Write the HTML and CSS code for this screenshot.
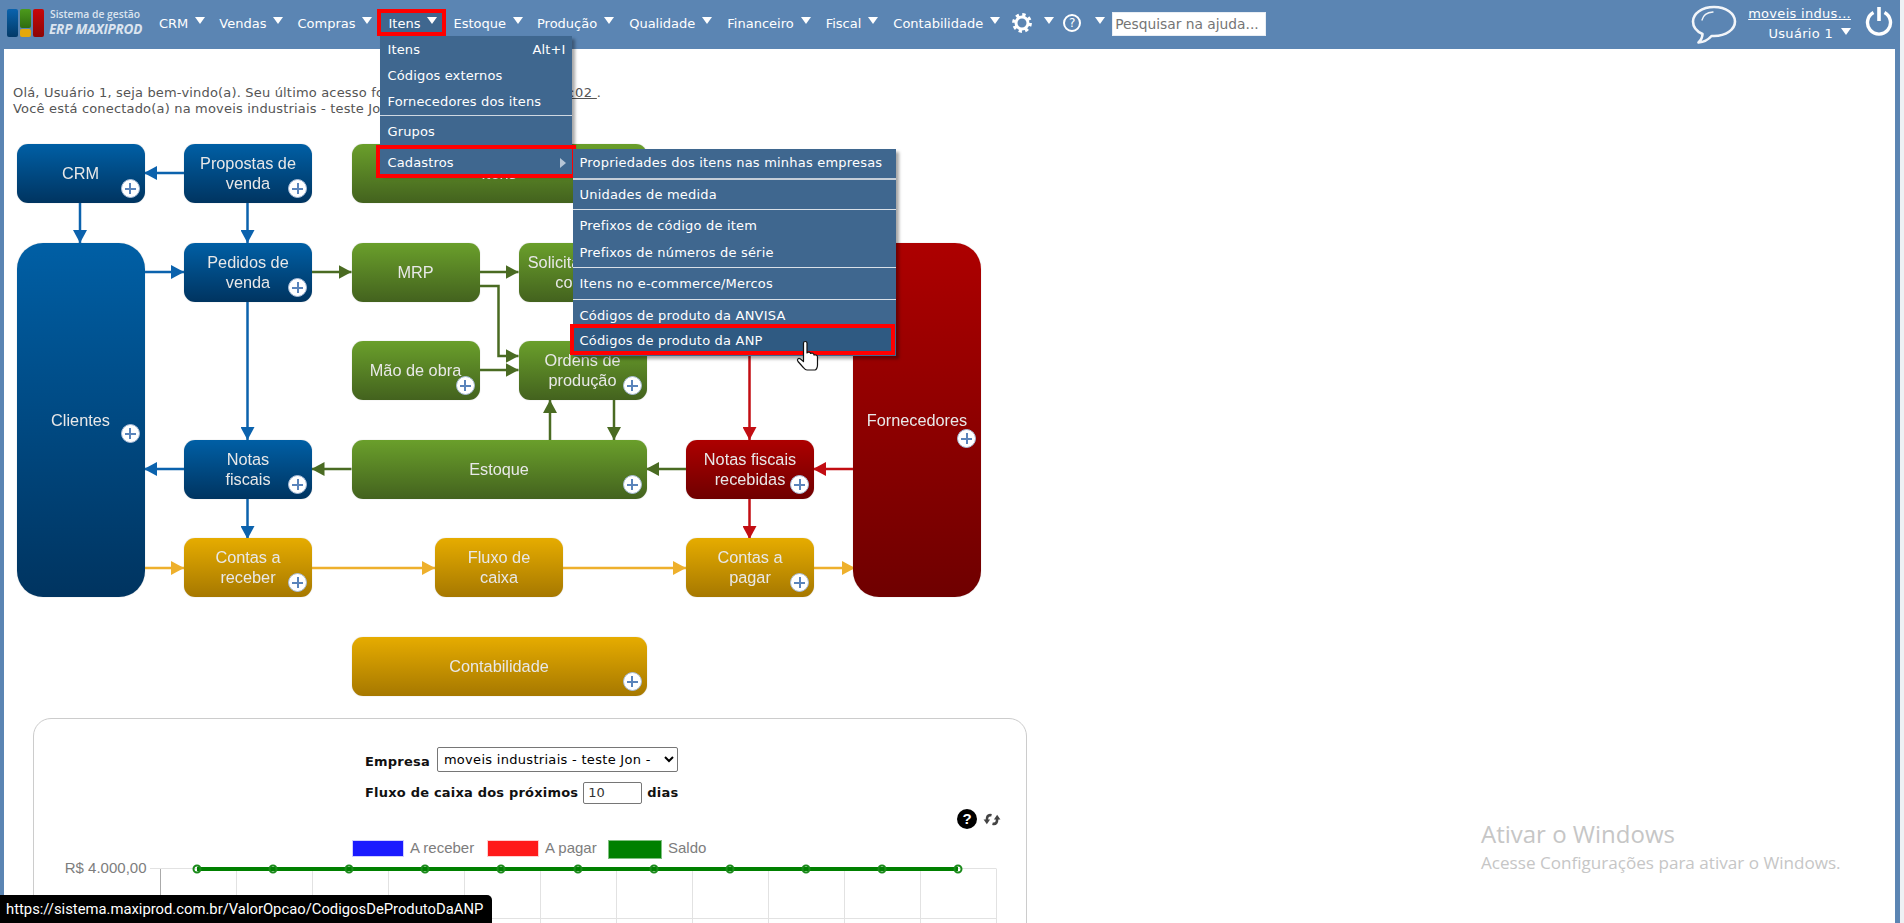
FILE: index.html
```html
<!DOCTYPE html>
<html lang="pt-BR">
<head>
<meta charset="utf-8">
<title>ERP MAXIPROD</title>
<link rel="stylesheet" href="styles.css">
</head>
<body>
<div class="page">
  <header class="topbar">
    <div class="logo">
      <svg class="logo-mark" width="37" height="28" viewBox="0 0 37 28">
        <defs>
          <linearGradient id="lb" x1="0" y1="0" x2="0" y2="1"><stop offset="0" stop-color="#0a63ad"/><stop offset="1" stop-color="#033a68"/></linearGradient>
          <linearGradient id="lg" x1="0" y1="0" x2="0" y2="1"><stop offset="0" stop-color="#4c9a1c"/><stop offset="1" stop-color="#2f6d10"/></linearGradient>
          <linearGradient id="lr" x1="0" y1="0" x2="0" y2="1"><stop offset="0" stop-color="#c80808"/><stop offset="1" stop-color="#8c0505"/></linearGradient>
        </defs>
        <rect x="0" y="0" width="11" height="28" rx="2" fill="url(#lb)"/>
        <rect x="13" y="0" width="11" height="19" rx="2" fill="url(#lg)"/>
        <rect x="13" y="20" width="11" height="8" rx="2" fill="#e4a80c"/>
        <rect x="26" y="0" width="11" height="28" rx="2" fill="url(#lr)"/>
      </svg>
      <div class="logo-text">
        <span class="logo-top">Sistema de gestão</span>
        <span class="logo-name">ERP MAXIPROD</span>
      </div>
    </div>
    <nav>
      <ul class="menu">
        <li class="menu-item"><a>CRM</a><span class="caret"></span></li>
        <li class="menu-item"><a>Vendas</a><span class="caret"></span></li>
        <li class="menu-item"><a>Compras</a><span class="caret"></span></li>
        <li class="menu-item is-open"><a>Itens</a><span class="caret"></span>
          <ul class="dropdown">
            <li class="drop-row"><span>Itens</span><span>Alt+I</span></li>
            <li class="drop-row">Códigos externos</li>
            <li class="drop-row">Fornecedores dos itens</li>
            <li class="drop-sep"></li>
            <li class="drop-row">Grupos</li>
            <li class="drop-sep"></li>
            <li class="drop-row is-active"><span>Cadastros</span><span class="sub-arrow"></span>
              <ul class="submenu">
                <li class="sub-row">Propriedades dos itens nas minhas empresas</li>
                <li class="sub-sep sub-sep-thick"></li>
                <li class="sub-row">Unidades de medida</li>
                <li class="sub-sep"></li>
                <li class="sub-row">Prefixos de código de item</li>
                <li class="sub-row">Prefixos de números de série</li>
                <li class="sub-sep"></li>
                <li class="sub-row">Itens no e-commerce/Mercos</li>
                <li class="sub-sep"></li>
                <li class="sub-row">Códigos de produto da ANVISA</li>
                <li class="sub-row is-hover">Códigos de produto da ANP</li>
              </ul>
            </li>
          </ul>
        </li>
        <li class="menu-item"><a>Estoque</a><span class="caret"></span></li>
        <li class="menu-item menu-loose"><a>Produção</a><span class="caret"></span></li>
        <li class="menu-item menu-loose"><a>Qualidade</a><span class="caret"></span></li>
        <li class="menu-item menu-loose"><a>Financeiro</a><span class="caret"></span></li>
        <li class="menu-item menu-loose"><a>Fiscal</a><span class="caret"></span></li>
        <li class="menu-item menu-loose"><a>Contabilidade</a><span class="caret"></span></li>
        <li class="menu-item menu-icon menu-gear">
          <svg width="20" height="20" viewBox="0 0 20 20"><circle cx="10" cy="10" r="8.3" fill="none" stroke="#fff" stroke-width="3.2" stroke-dasharray="3.26 3.26"/><circle cx="10" cy="10" r="6" fill="none" stroke="#fff" stroke-width="3"/></svg>
          <span class="caret"></span>
        </li>
        <li class="menu-item menu-icon menu-help">
          <span class="help-ring">?</span>
          <span class="caret"></span>
        </li>
      </ul>
    </nav>
    <input class="search" type="text" placeholder="Pesquisar na ajuda...">
    <div class="account">
      <svg class="chat" width="46" height="40" viewBox="0 0 46 40">
        <path d="M23 2C11 2 2 8.500 2 16.500C2 22 6 26.500 11.500 29C11.500 32 10 35 7.500 37.500C13 37 17.500 34.500 20.500 31C21.300 31 22.200 31 23 31C35 31 44 24.500 44 16.500C44 8.500 35 2 23 2Z" fill="none" stroke="#f2f5f9" stroke-width="2.600" stroke-linejoin="round"/>
        <path d="M11 15C12 10.500 16.500 7.500 22 7" fill="none" stroke="#f2f5f9" stroke-width="1.300" stroke-linecap="round"/>
      </svg>
      <div class="account-text">
        <a class="account-company">moveis indus...</a>
        <div class="account-user">Usuário 1<span class="caret"></span></div>
      </div>
      <svg class="power" width="28" height="30" viewBox="0 0 28 30">
        <path d="M8.500 6.500A11.500 11.500 0 1 0 19.500 6.500" fill="none" stroke="#fff" stroke-width="3.400"/>
        <path d="M14 1V15" fill="none" stroke="#fff" stroke-width="3.600"/>
      </svg>
    </div>
  </header>

  <main class="content">
    <p class="greeting">Olá, Usuário 1, seja bem-vindo(a). Seu último acesso foi em <u>09/05/2022 - às 10:15:02 </u>.<br>Você está conectado(a) na moveis industriais - teste Jon - 01.</p>

    <section class="diagram">
      <svg class="arrows" width="1000" height="566" viewBox="4 130 1000 566">
        <defs>
          <marker id="mb" markerUnits="userSpaceOnUse" markerWidth="13" markerHeight="14" refX="13" refY="7" orient="auto"><path d="M0 0L13 7L0 14Z" fill="#0b62ad"/></marker>
          <marker id="mg" markerUnits="userSpaceOnUse" markerWidth="13" markerHeight="14" refX="13" refY="7" orient="auto"><path d="M0 0L13 7L0 14Z" fill="#4a6b22"/></marker>
          <marker id="mr" markerUnits="userSpaceOnUse" markerWidth="13" markerHeight="14" refX="13" refY="7" orient="auto"><path d="M0 0L13 7L0 14Z" fill="#c20d12"/></marker>
          <marker id="my" markerUnits="userSpaceOnUse" markerWidth="13" markerHeight="14" refX="13" refY="7" orient="auto"><path d="M0 0L13 7L0 14Z" fill="#eeb02c"/></marker>
        </defs>
        <g class="a-blue">
          <path d="M184 173H144" marker-end="url(#mb)"/>
          <path d="M80 203V243" marker-end="url(#mb)"/>
          <path d="M247.500 203V243" marker-end="url(#mb)"/>
          <path d="M144 272H184" marker-end="url(#mb)"/>
          <path d="M247.500 301V440" marker-end="url(#mb)"/>
          <path d="M184 469H144" marker-end="url(#mb)"/>
          <path d="M247.500 499V539" marker-end="url(#mb)"/>
        </g>
        <g class="a-green">
          <path d="M311 272H351.500" marker-end="url(#mg)"/>
          <path d="M479 272H518.500" marker-end="url(#mg)"/>
          <path d="M479 286H498.500V356H518.500" marker-end="url(#mg)"/>
          <path d="M479 370H518.500" marker-end="url(#mg)"/>
          <path d="M614 400V440" marker-end="url(#mg)"/>
          <path d="M550 440V400" marker-end="url(#mg)"/>
          <path d="M351.500 469H311.500" marker-end="url(#mg)"/>
          <path d="M686 469H646" marker-end="url(#mg)"/>
        </g>
        <g class="a-red">
          <path d="M749.500 301V440" marker-end="url(#mr)"/>
          <path d="M853 469H813" marker-end="url(#mr)"/>
          <path d="M749.500 499V539" marker-end="url(#mr)"/>
        </g>
        <g class="a-gold">
          <path d="M144 568H184" marker-end="url(#my)"/>
          <path d="M311 568H435" marker-end="url(#my)"/>
          <path d="M562 568H686" marker-end="url(#my)"/>
          <path d="M813 568H855" marker-end="url(#my)"/>
        </g>
      </svg>
      <div class="node blue n-crm">CRM<i class="plus"></i></div>
      <div class="node blue n-prop">Propostas de<br>venda<i class="plus"></i></div>
      <div class="node green n-itens wide">Itens<i class="plus"></i></div>
      <div class="node blue tall n-cli">Clientes<i class="plus plus-cli"></i></div>
      <div class="node blue n-ped">Pedidos de<br>venda<i class="plus"></i></div>
      <div class="node green n-mrp">MRP</div>
      <div class="node green n-sol">Solicitações de<br>compra<i class="plus"></i></div>
      <div class="node red n-pc">Pedidos de<br>compra<i class="plus"></i></div>
      <div class="node green n-mao">Mão de obra<i class="plus"></i></div>
      <div class="node green n-ord">Ordens de<br>produção<i class="plus"></i></div>
      <div class="node blue n-nf">Notas<br>fiscais<i class="plus"></i></div>
      <div class="node green wide n-est">Estoque<i class="plus"></i></div>
      <div class="node red n-nfr">Notas fiscais<br>recebidas<i class="plus"></i></div>
      <div class="node red tall n-for">Fornecedores<i class="plus plus-for"></i></div>
      <div class="node gold n-rec">Contas a<br>receber<i class="plus"></i></div>
      <div class="node gold n-flu">Fluxo de<br>caixa</div>
      <div class="node gold n-pag">Contas a<br>pagar<i class="plus"></i></div>
      <div class="node gold wide n-con">Contabilidade<i class="plus"></i></div>
    </section>

    <section class="card">
      <form class="cash-form">
        <div class="form-row form-first">
          <label class="form-label">Empresa</label>
          <select class="form-select"><option>moveis industriais - teste Jon -</option></select>
        </div>
        <div class="form-row">
          <label class="form-label">Fluxo de caixa dos próximos</label>
          <input class="form-days" type="text" value="10">
          <span class="form-label">dias</span>
        </div>
      </form>
      <div class="tools">
        <span class="tool-help">?</span>
        <svg width="18" height="15" viewBox="0 0 18 16">
          <path d="M8.500 3.500C4.500 2.500 3.500 5 3.500 9" fill="none" stroke="#444" stroke-width="2.800"/>
          <path d="M0 8L3.500 13L7 8Z" fill="#444"/>
          <path d="M9.500 12.500C13.500 13.500 14.500 11 14.500 7" fill="none" stroke="#444" stroke-width="2.800"/>
          <path d="M11 8L14.500 3L18 8Z" fill="#444"/>
        </svg>
      </div>
      <svg class="chart" width="991" height="300" viewBox="34 829 991 300">
        <rect x="352.500" y="840.500" width="51" height="16" fill="#1a1aff" stroke="#cfcfff"/>
        <text class="legend" x="410" y="853">A receber</text>
        <rect x="487.500" y="840.500" width="51" height="16" fill="#ff1a1a" stroke="#ffd0d0"/>
        <text class="legend" x="545" y="853">A pagar</text>
        <rect x="608.500" y="840.500" width="53" height="18" fill="#008000" stroke="#80c080"/>
        <text class="legend" x="668" y="853">Saldo</text>
        <text class="axis-label" x="146.500" y="873" text-anchor="end">R$ 4.000,00</text>
        <g class="grid">
          <path d="M150 868.500H996.500"/>
          <path d="M150 918.500H996.500"/>
          <path d="M150 968.500H996.500"/>
          <path d="M236.500 869V1129"/><path d="M312.500 869V1129"/><path d="M388.500 869V1129"/>
          <path d="M464.500 869V1129"/><path d="M540.500 869V1129"/><path d="M616.500 869V1129"/>
          <path d="M692.500 869V1129"/><path d="M768.500 869V1129"/><path d="M844.500 869V1129"/>
          <path d="M920.500 869V1129"/><path d="M996.500 869V1129"/>
        </g>
        <path class="axis" d="M160.500 869V1129"/>
        <path class="balance" d="M197 869H958"/>
        <g class="dots">
          <circle cx="197" cy="869" r="3.500"/><circle cx="273" cy="869" r="3.500"/><circle cx="349" cy="869" r="3.500"/>
          <circle cx="425" cy="869" r="3.500"/><circle cx="501" cy="869" r="3.500"/><circle cx="578" cy="869" r="3.500"/>
          <circle cx="654" cy="869" r="3.500"/><circle cx="730" cy="869" r="3.500"/><circle cx="806" cy="869" r="3.500"/>
          <circle cx="882" cy="869" r="3.500"/><circle cx="958" cy="869" r="3.500"/>
        </g>
      </svg>
    </section>
  </main>

  <div class="activation">
    <div class="activation-title">Ativar o Windows</div>
    <div class="activation-text">Acesse Configurações para ativar o Windows.</div>
  </div>
  <div class="statusbar">https://sistema.maxiprod.com.br/ValorOpcao/CodigosDeProdutoDaANP</div>
  <svg class="cursor" width="24" height="32" viewBox="0 0 24 32">
    <path d="M8.500 3C8.500 1 12 1 12 3V13C13 11.500 15.500 12 15.500 13.500C17 12.500 19 13.500 19 15C20 14.500 22.500 15 22.500 17V25C22.500 28 21 30 20 30H12C10 30 9 28 7 26L3 21.500C1.500 19.500 3.500 17.500 5.500 19L8.500 21.500Z" fill="#fff" stroke="#111" stroke-width="1.200" stroke-linejoin="round"/>
  </svg>
</div>
</body>
</html>
```
FILE: styles.css
```css
* { box-sizing: border-box; }
html, body { margin: 0; height: 100%; overflow: hidden; }
body { font-family: "DejaVu Sans", sans-serif; font-size: 13px; background: #5b85b3; color: #555; }
ul { list-style: none; margin: 0; padding: 0; }

.page { display: flex; flex-direction: column; height: 923px; border-right: 4px solid #eef1f4; }

/* top bar */
.topbar { display: flex; align-items: flex-start; height: 49px; flex: none; background: #5b85b3; color: #fff; position: relative; z-index: 5; }
.logo { display: flex; width: 152px; flex: none; padding: 9px 0 0 7px; gap: 6px; }
.logo-mark { flex: none; }
.logo-text { display: flex; flex-direction: column; font-family: "Open Sans", sans-serif; color: #dbe4ef; white-space: nowrap; }
.logo-top { font-size: 10.3px; font-weight: 600; line-height: 11px; }
.logo-name { font-size: 13.5px; font-weight: 700; font-style: italic; line-height: 19px; margin-left: -1px; letter-spacing: -.2px; }

.menu { display: flex; margin-top: 12px; }
.menu-item { position: relative; display: flex; align-items: center; gap: 7px; height: 21px; padding: 0 7px; white-space: nowrap; color: #fff; }
.menu-item > a { padding-top: 2px; }
.menu-item.menu-loose { padding-right: 8px; }
.menu-item.menu-gear { margin-left: 4px; }
.menu-item.menu-icon { padding: 0 9px 0 0; gap: 12px; }
.menu-item.menu-help { gap: 14px; padding-right: 7px; }
.caret { width: 0; height: 0; flex: none; margin-top: -5px; border-left: 5px solid transparent; border-right: 5px solid transparent; border-top: 7px solid #fff; }
.help-ring { width: 18px; height: 18px; margin-top: 1px; border: 2px solid #fff; border-radius: 50%; display: flex; align-items: center; justify-content: center; font-size: 12px; line-height: 1; color: #fff; }

.menu-item.is-open { background: #3f678f; outline: 4px solid #f00; height: 19px; margin: 1px 4px 0 2px; padding: 0 5px 0 7px; }
.dropdown { position: absolute; left: -1px; top: 23px; width: 192px; background: #3f678f; box-shadow: 3px 3px 3px rgba(0,0,0,.35); letter-spacing: .15px; }
.drop-row { display: flex; justify-content: space-between; align-items: center; height: 26px; padding: 0 7px; color: #fff; position: relative; }
.drop-sep { height: 4px; padding-top: 1px; }
.drop-sep::before { content: ""; display: block; height: 1px; background: #cfd8e2; }
.drop-row.is-active { height: 25px; outline: 4px solid #f00; margin-top: 1px; padding-top: 2px; }
.sub-arrow { width: 0; height: 0; border-top: 5px solid transparent; border-bottom: 5px solid transparent; border-left: 6px solid #b7c6d6; margin-right: -1px; }
.submenu { position: absolute; left: 193px; top: 0; width: 323px; background: #3f678f; box-shadow: 3px 3px 3px rgba(0,0,0,.35); padding-bottom: 5px; letter-spacing: .2px; }
.sub-row { height: 26.5px; line-height: 27px; padding-left: 6px; color: #fff; white-space: nowrap; }
.sub-sep { height: 5px; padding-top: 2px; }
.sub-sep::before { content: ""; display: block; height: 1px; background: #d9e0e8; }
.sub-sep-thick::before { height: 2px; background: #c5ced8; }
.sub-row.is-hover { background: #2f5a82; outline: 4px solid #f00; margin: 0 5px 0 1px; height: 23px; line-height: 25px; padding-left: 5px; }

.search { flex: none; margin: 12px 0 0 0; width: 154px; height: 24px; border: 1px solid #e9eef4; padding: 0 2px; background: #fff; font: 13.8px "DejaVu Sans", sans-serif; border-radius: 0; }
.search::placeholder { color: #757575; opacity: 1; }

.account { display: flex; margin-left: auto; align-items: flex-start; padding-right: 7px; }
.chat { margin-top: 5px; flex: none; }
.account-text { display: flex; flex-direction: column; align-items: flex-end; margin: 6px 0 0 11px; line-height: 16px; white-space: nowrap; letter-spacing: .3px; }
.account-company { color: #fff; text-decoration: underline; }
.account-user { display: flex; align-items: center; gap: 8px; margin-top: 4px; color: #fff; }
.power { flex: none; margin: 6px 0 0 14px; }

/* main */
.content { flex: 1; min-height: 0; margin-left: 4px; margin-right: 5px; background: #fff; overflow: hidden; padding-top: 36px; }
.greeting { margin: 0 0 14px 9px; line-height: 15.5px; white-space: nowrap; letter-spacing: .18px; }
.greeting u { color: #555; letter-spacing: .4px; }

.diagram { position: relative; height: 566px; width: 1000px; filter: blur(.4px); font-family: "Liberation Sans", sans-serif; }
.arrows { position: absolute; left: 0; top: 0; }
.a-blue path, .a-green path, .a-red path, .a-gold path { fill: none; stroke-width: 2.5px; }
.a-blue path { stroke: #0b62ad; }
.a-green path { stroke: #4a6b22; }
.a-red path { stroke: #c20d12; }
.a-gold path { stroke: #eeb02c; }

.node { position: absolute; width: 128px; height: 59px; display: flex; align-items: center; justify-content: center; text-align: center; padding-bottom: 1px; font-size: 16.3px; line-height: 20px; color: #e8e8e8; border-radius: 11px; box-shadow: 0 0 1px rgba(120,120,120,.6); }
.node.wide { width: 295px; }
.node.tall { height: 354px; border-radius: 26px; }
.blue { background: linear-gradient(#005fa5, #003460); }
.green { background: linear-gradient(#6a9f2b, #43621e); }
.red { background: linear-gradient(#ad0000, #6f0000); }
.gold { background: linear-gradient(#e6ac00, #a67800); }

.plus { position: absolute; right: 5px; bottom: 5px; width: 19px; height: 19px; border-radius: 50%; background: #fff; border: 1px solid #a8bcd8; }
.plus::before, .plus::after { content: ""; position: absolute; background: #5a84bb; }
.plus::before { left: 3px; right: 3px; top: 7.5px; height: 2px; }
.plus::after { top: 3px; bottom: 3px; left: 7.5px; width: 2px; }
.plus-cli { bottom: 154px; }
.plus-for { bottom: 149px; }

.n-crm { left: 12.500px; top: 14px; }
.n-prop { left: 180px; top: 14px; }
.n-itens { left: 347.500px; top: 14px; }
.n-cli { left: 12.500px; top: 113px; }
.n-ped { left: 180px; top: 113px; }
.n-mrp { left: 347.500px; top: 113px; }
.n-sol { left: 514.500px; top: 113px; }
.n-pc { left: 682px; top: 113px; }
.n-mao { left: 347.500px; top: 211px; }
.n-ord { left: 514.500px; top: 211px; }
.n-nf { left: 180px; top: 310px; }
.n-est { left: 347.500px; top: 310px; }
.n-nfr { left: 682px; top: 310px; }
.n-for { left: 849px; top: 113px; }
.n-rec { left: 180px; top: 408px; }
.n-flu { left: 431px; top: 408px; }
.n-pag { left: 682px; top: 408px; }
.n-con { left: 347.500px; top: 507px; }

/* cash flow card */
.card { margin: 22px 0 0 29px; width: 994px; height: 420px; border: 1px solid #ccc; border-radius: 18px; padding-top: 28px; }
.cash-form { padding-left: 331px; color: #000; }
.form-row { display: flex; align-items: center; height: 23px; gap: 5px; margin-bottom: 9px; }
.form-first { height: 25px; margin-bottom: 9px; gap: 7px; }
.form-first .form-label { padding-top: 4px; }
.form-label { font-weight: 700; color: #111; letter-spacing: .2px; }
.form-select { width: 241px; height: 25px; font: 13px "DejaVu Sans", sans-serif; letter-spacing: .3px; color: #000; background: #fff; border: 1px solid #767676; border-radius: 2px; padding-left: 2px; }
.form-days { width: 59px; height: 22px; font: 13px "DejaVu Sans", sans-serif; color: #333; border: 1px solid #767676; border-radius: 2px; padding: 0 4px; }
.tools { display: flex; justify-content: flex-end; align-items: center; gap: 6px; height: 20px; margin-top: -4px; padding-right: 25px; }
.tool-help { width: 20px; height: 20px; border-radius: 50%; background: #000; color: #fff; font: 700 15px/20px "Liberation Sans", sans-serif; text-align: center; }
.chart { display: block; margin-top: 0; }
.legend, .axis-label { font: 15px "Liberation Sans", sans-serif; fill: #7d7d7d; }
.grid path { stroke: #e2e2e2; fill: none; }
.axis { stroke: #aaa; fill: none; }
.balance { stroke: #008000; stroke-width: 4px; fill: none; }
.dots circle { fill: #fff; fill-opacity: 0; stroke: #1a8a1a; stroke-width: 2px; }

/* overlays */
.activation { position: absolute; left: 1481px; top: 818px; color: #c6c6c6; font-family: "Open Sans", sans-serif; white-space: nowrap; }
.activation-title { font-size: 24px; line-height: 32px; }
.activation-text { font-size: 17.1px; line-height: 22px; margin-top: 2px; }
.statusbar { position: absolute; left: 0; top: 895px; width: 492px; height: 28px; padding-left: 6px; background: #000; border-top-right-radius: 5px; color: #fff; font: 14.8px/28px "Roboto", sans-serif; white-space: nowrap; }
.cursor { position: absolute; left: 795px; top: 340px; z-index: 9; }
```
